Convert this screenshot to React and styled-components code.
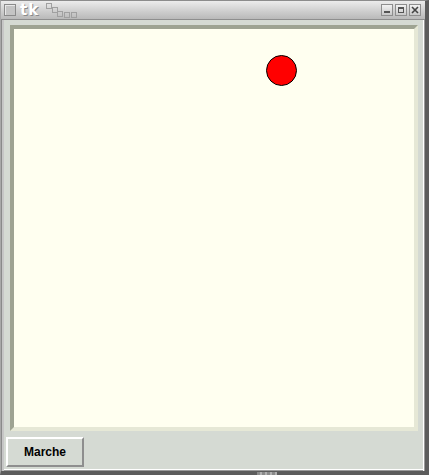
import { styled, createGlobalStyle } from "styled-components";

const Global = createGlobalStyle`
  html, body {
    margin: 0;
    padding: 0;
    background: #ffffff;
  }
`;

const Frame = styled.div`
  width: 429px;
  height: 475px;
  box-sizing: border-box;
  display: flex;
  flex-direction: column;
  background: #d5dad3;
  border-left: 1px solid #a9a9a9;
  border-right: 4px solid #5c5c5c;
  border-bottom: 4px solid #5c5c5c;
  border-top: 1px solid #8c8c8c;
  box-shadow: inset 1px 0 0 #8a8a8a, inset 3px 0 0 #c6c6c6, inset -1px 0 0 #9a9a9a, inset -2px 0 0 #ffffff, inset 0 -1px 0 #9a9a9a, inset 0 -2px 0 #ffffff;
  position: relative;
`;

const TitleBar = styled.div`
  height: 18px;
  display: flex;
  align-items: center;
  padding: 0 4px 0 3px;
  background: linear-gradient(#ececec, #cfcfcf 55%, #b9b9b9);
  border-bottom: 1px solid #8e8e8e;
`;

const AppIcon = styled.div`
  width: 10px;
  height: 10px;
  border: 1px solid #8a8a8a;
  background: #c4c4c4;
  box-shadow: inset 1px 1px 0 #e8e8e8;
`;

const Title = styled.span`
  margin-left: 4px;
  font-family: "DejaVu Sans", sans-serif;
  font-weight: bold;
  font-size: 15px;
  color: #ffffff;
  text-shadow: 1px 1px 0 #8a8a8a;
  letter-spacing: 1px;
`;

const Deco = styled.svg`
  margin-left: 5px;
  align-self: flex-start;
  margin-top: 1px;
`;

const Spacer = styled.div`
  flex: 1;
`;

const WinButton = styled.div`
  width: 10px;
  height: 10px;
  margin-left: 2px;
  border: 1px solid #8e8e8e;
  background: linear-gradient(#f2f2f2, #c8c8c8);
  display: flex;
  align-items: center;
  justify-content: center;
`;

const Body = styled.div`
  flex: 1;
  display: flex;
  flex-direction: column;
  padding: 5px 7px 0 4px;
`;

const Canvas = styled.div`
  position: relative;
  margin-left: 5px;
  width: 400px;
  height: 398px;
  background: #fffff0;
  border-style: solid;
  border-width: 4px;
  border-color: #9ea392 #e6e8d6 #e6e8d6 #9ea392;
`;

const Ball = styled.div`
  position: absolute;
  left: 252px;
  top: 26px;
  width: 29px;
  height: 29px;
  border-radius: 50%;
  background: #ff0000;
  border: 1px solid #000000;
`;

const ButtonRow = styled.div`
  display: flex;
  padding-top: 6px;
`;

const Button = styled.button`
  margin-left: 1px;
  width: 78px;
  height: 30px;
  box-sizing: border-box;
  background: #d5dad3;
  border-style: solid;
  border-width: 2px;
  border-color: #ffffff #8e8e8e #8e8e8e #ffffff;
  font-family: "Liberation Sans", Arial, sans-serif;
  font-weight: bold;
  font-size: 12px;
  color: #000000;
  padding: 0;
`;

const Grip = styled.div`
  position: absolute;
  left: 256px;
  bottom: -4px;
  width: 20px;
  height: 3px;
  background: repeating-linear-gradient(90deg, #8a8a8a 0 3px, #b0b0b0 3px 5px);
`;

function App() {
  return (
    <>
      <Global />
      <Frame>
        <TitleBar>
          <AppIcon />
          <Title>tk</Title>
          <Deco width="34" height="17" viewBox="0 0 34 17">
            <g fill="none" stroke="#a0a0a0" strokeWidth="1">
              <rect x="2.5" y="1.5" width="5" height="5" />
              <rect x="8.5" y="5.5" width="5" height="5" />
              <rect x="13.5" y="9.5" width="5" height="5" />
              <rect x="20.5" y="10.5" width="5" height="5" />
              <rect x="27.5" y="10.5" width="5" height="5" />
            </g>
          </Deco>
          <Spacer />
          <WinButton>
            <svg width="8" height="8" viewBox="0 0 8 8">
              <rect x="1" y="5" width="6" height="2" fill="#555" />
            </svg>
          </WinButton>
          <WinButton>
            <svg width="8" height="8" viewBox="0 0 8 8">
              <rect x="1.5" y="1.5" width="5" height="5" fill="none" stroke="#555" />
              <rect x="1" y="1" width="6" height="2" fill="#555" />
            </svg>
          </WinButton>
          <WinButton>
            <svg width="8" height="8" viewBox="0 0 8 8">
              <path d="M1 1 L7 7 M7 1 L1 7" stroke="#444" strokeWidth="1.6" />
            </svg>
          </WinButton>
        </TitleBar>
        <Body>
          <Canvas>
            <Ball />
          </Canvas>
          <ButtonRow>
            <Button>Marche</Button>
          </ButtonRow>
        </Body>
        <Grip />
      </Frame>
    </>
  );
}

export default App;
